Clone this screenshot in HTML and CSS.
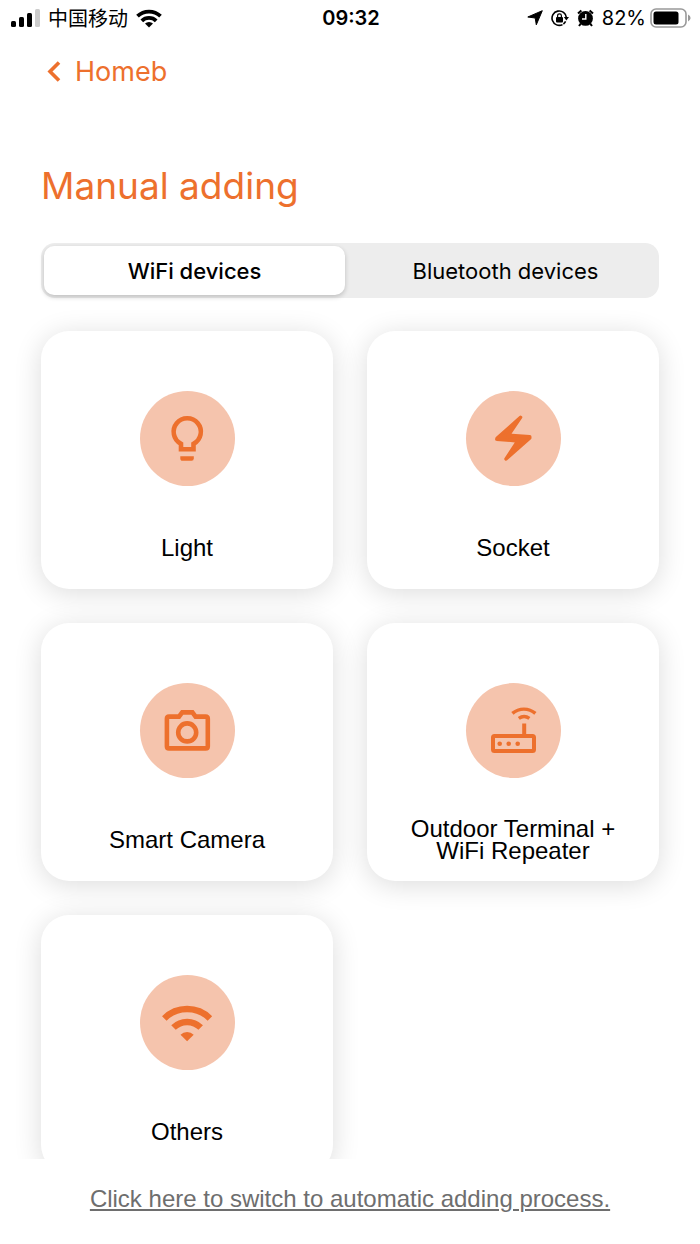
FILE: index.html
```
<!DOCTYPE html>
<html lang="en">

<head>
    <meta charset="utf-8">
    <meta name="viewport" content="width=device-width, initial-scale=1">
    <title>Manual adding</title>
    <link rel="stylesheet" href="styles.css">
</head>

<body>
    <div class="status-bar">
        <div class="status-left">
            <svg width="29" height="18" viewBox="0 0 29 18">
                <rect x="0" y="12" width="5" height="6" rx="1.5" />
                <rect x="8" y="8" width="5" height="10" rx="1.5" />
                <rect x="16" y="4" width="5" height="14" rx="1.5" />
                <rect x="24" y="0" width="5" height="18" rx="1.5" fill="#ccc" />
            </svg>
            <span class="carrier" lang="zh">中国移动</span>
            <svg width="26" height="19" viewBox="0 0 26 19">
                <g fill="none" stroke="#000" stroke-width="3.8">
                    <path d="M1.5 7.2A16.5 16.5 0 0 1 24.5 7.2" />
                    <path d="M5.8 11.8A10.3 10.3 0 0 1 20.2 11.8" />
                </g>
                <path d="M13 18.5L9 14.5A5.8 5.8 0 0 1 17 14.5Z" />
            </svg>
        </div>
        <time class="clock">09:32</time>
        <div class="status-right">
            <svg width="16" height="16" viewBox="0 0 16 16">
                <path d="M15.3.7L9.3 14.8 8.2 8 .8 7Z" stroke="#000" stroke-linejoin="round" />
            </svg>
            <svg width="18" height="18" viewBox="0 0 18 18">
                <path d="M11.5 15.6A7.2 7.2 0 1 1 15.4 8.6" fill="none" stroke="#000" stroke-width="1.6" />
                <path d="M12.8 8H18L15.4 11.6Z" />
                <path d="M14.6 12.4A7.2 7.2 0 0 1 12.4 15" fill="none" stroke="#000" stroke-width="1.6" />
                <rect x="5" y="8" width="7" height="5.4" rx="1" />
                <path d="M6.6 8.4V6.8a1.9 1.9 0 0 1 3.8 0V8.4" fill="none" stroke="#000" stroke-width="1.2" />
            </svg>
            <svg width="17" height="18" viewBox="0 0 17 18">
                <circle cx="8.5" cy="9.4" r="7.4" />
                <path d="M1 4.6L4.4 1.4M12.6 1.4L16 4.6M3.8 14.6L2 17M13.2 14.6L15 17" stroke="#000" stroke-width="2" />
                <path d="M8.8 5V10H5" fill="none" stroke="#fff" stroke-width="1.4" />
            </svg>
            <div class="battery">
                <span>82%</span>
                <svg width="41" height="20" viewBox="0 0 41 20">
                    <rect x="1" y="1" width="35" height="18" rx="5" fill="#fff" stroke="#999" stroke-width="1.6" />
                    <rect x="3.5" y="3.5" width="25" height="13" rx="2.5" />
                    <path d="M38 6.6Q40.6 8 40.6 10T38 13.4Z" fill="#999" />
                </svg>
            </div>
        </div>
    </div>

    <header class="header">
        <a class="back" href="#">
            <svg width="14" height="22" viewBox="0 0 14 22">
                <path d="M12 1.5L3 10.5L12 19.5" fill="none" stroke="currentColor" stroke-width="3.6" />
            </svg>
            Homeb
        </a>
        <h1>Manual adding</h1>
        <div class="tabs" role="tablist">
            <button class="tab active" role="tab" aria-selected="true">WiFi devices</button>
            <button class="tab" role="tab" aria-selected="false">Bluetooth devices</button>
        </div>
    </header>

    <main class="devices">
        <button class="card">
            <svg class="icon" viewBox="0 0 95 95">
                <path class="line" d="M41 58.2V52.9A13.6 13.6 0 1 1 53.5 52.9V58.2Z" />
                <path class="solid" d="M40.3 65.2H53.8V67.2Q53.8 69.8 51.6 69.8H42.6Q40.3 69.8 40.3 67.2Z" />
            </svg>
            <span class="label">Light</span>
        </button>
        <button class="card">
            <svg class="icon" viewBox="0 0 95 95">
                <path class="solid bolt" d="M54.6 26.3L31 47.3L30.8 48.2L51.8 50L40 68L63.8 47L63.8 45.8L42.4 44.3Z" />
            </svg>
            <span class="label">Socket</span>
        </button>
        <button class="card">
            <svg class="icon" viewBox="0 0 95 95">
                <path class="line" d="M29 33.6H39L42.2 29.4H52.4L55.6 33.6H65.6Q67.8 33.6 67.8 35.8V63.2Q67.8 65.4 65.6 65.4H29Q26.9 65.4 26.9 63.2V35.8Q26.9 33.6 29 33.6Z" />
                <circle class="line" cx="47.2" cy="49.4" r="9" />
            </svg>
            <span class="label">Smart Camera</span>
        </button>
        <button class="card">
            <svg class="icon" viewBox="0 0 95 95">
                <rect class="line thin" x="27" y="53" width="41" height="15" rx="1.5" />
                <circle class="solid" cx="33.7" cy="60.7" r="2.3" />
                <circle class="solid" cx="42.7" cy="60.7" r="2.3" />
                <circle class="solid" cx="51.7" cy="60.7" r="2.3" />
                <path class="line thin" d="M58.2 40.4V53" />
                <path class="line wave" d="M46.4 30.4A17.5 17.5 0 0 1 69.4 30.4" />
                <path class="line wave" d="M52.8 35.4A9 9 0 0 1 63.4 35.4" />
            </svg>
            <span class="label">Outdoor Terminal + WiFi Repeater</span>
        </button>
        <button class="card">
            <svg class="icon" viewBox="0 0 95 95">
                <path class="line wide" d="M24.3 43.4A32.3 32.3 0 0 1 69.9 43.4" />
                <path class="line wide" d="M33.5 52.6A19.3 19.3 0 0 1 60.7 52.6" />
                <path class="solid" d="M47.1 66.3L40.5 59.7A9.3 9.3 0 0 1 53.7 59.7Z" />
            </svg>
            <span class="label">Others</span>
        </button>
    </main>

    <footer class="footer">
        <a href="#">Click here to switch to automatic adding process.</a>
    </footer>
</body>

</html>
```
FILE: styles.css
```
* {
    box-sizing: border-box;
}

body {
    margin: 0;
    height: 100vh;
    display: flex;
    flex-direction: column;
    background-color: #fff;
    color: #000;
    font-family: Inter, "Noto Sans CJK SC", sans-serif;
}

svg {
    flex: none;
}

button {
    border: none;
    padding: 0;
    color: inherit;
    cursor: pointer;
}

/* Phone status bar */
.status-bar {
    display: grid;
    grid-template-columns: 1fr auto 1fr;
    align-items: center;
    height: 36px;
    padding: 0 9px 0 11px;
    font-size: 20px;
    line-height: 24px;
}

.status-left,
.status-right {
    display: flex;
    align-items: center;
    gap: 8px;
}

.status-right {
    justify-content: flex-end;
}

.battery {
    display: flex;
    align-items: center;
    gap: 4px;
}

.carrier {
    font-family: "Noto Sans CJK SC", sans-serif;
}

.clock {
    font-weight: 600;
}

/* Back link, title and tabs */
.header {
    padding: 16px 41px 0;
}

.back {
    display: flex;
    align-items: center;
    gap: 14px;
    padding-left: 6px;
    color: #ed702d;
    font-size: 27px;
    line-height: 40px;
    text-decoration: none;
}

h1 {
    margin: 70px 0 33px;
    color: #ed702d;
    font-size: 37px;
    font-weight: 400;
    line-height: 48px;
}

.tabs {
    display: flex;
    gap: 10px;
    height: 55px;
    padding: 3px;
    border-radius: 14px;
    background-color: #ededed;
}

.tab {
    flex: 1;
    border-radius: 10px;
    background: none;
    font-family: inherit;
    font-size: 22px;
    font-weight: 400;
}

.tab.active {
    background-color: #fff;
    box-shadow: 0 2px 5px rgba(0, 0, 0, 0.2);
    font-weight: 500;
}

/* Device cards */
.devices {
    flex: 1;
    min-height: 0;
    overflow: hidden;
    display: grid;
    grid-template-columns: 1fr 1fr;
    grid-auto-rows: 258px;
    gap: 34px;
    padding: 33px 41px 0;
}

.card {
    display: flex;
    flex-direction: column;
    align-items: center;
    padding: 60px 40px 0;
    border-radius: 28px;
    background-color: #fff;
    box-shadow: 0 4px 28px rgba(0, 0, 0, 0.14);
    font-family: "Liberation Sans", Arial, sans-serif;
    font-size: 24px;
    line-height: 22px;
}

.icon {
    width: 95px;
    height: 95px;
    border-radius: 50%;
    background-color: #f5c4ad;
}

.line {
    fill: none;
    stroke: #ed702d;
    stroke-width: 4.6;
}

.thin {
    stroke-width: 4;
}

.wave {
    stroke-width: 3.4;
}

.wide {
    stroke-width: 6.4;
}

.solid {
    fill: #ed702d;
}

.bolt {
    stroke: #ed702d;
    stroke-width: 3.4;
    stroke-linejoin: round;
}

.label {
    flex: 1;
    display: flex;
    align-items: center;
    padding-top: 20px;
}

/* Switch link */
.footer {
    height: 85px;
    padding-top: 24px;
    text-align: center;
    font-family: "Liberation Sans", Arial, sans-serif;
    font-size: 24px;
    line-height: 32px;
}

.footer a {
    color: #6e6e6e;
    text-decoration-thickness: 2px;
    text-underline-offset: 2px;
}
```
